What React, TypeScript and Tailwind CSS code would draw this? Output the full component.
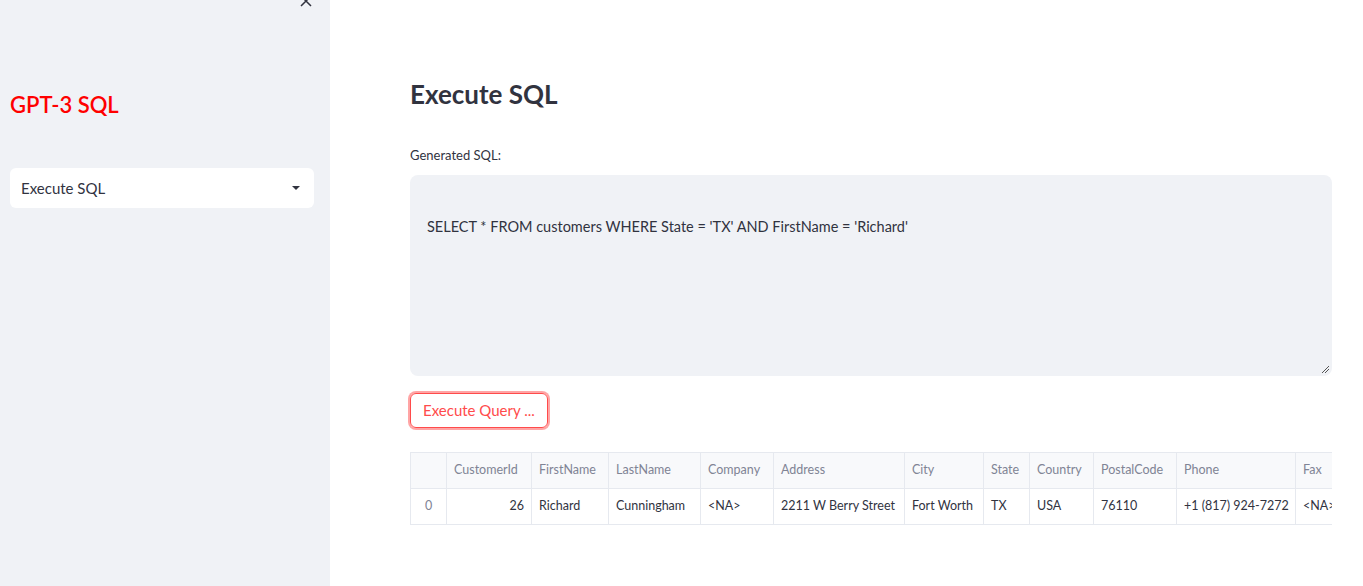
const COLS = [
  { name: "", w: 36, val: "0", align: "text-center", idx: true },
  { name: "CustomerId", w: 85, val: "26", align: "text-right" },
  { name: "FirstName", w: 77, val: "Richard" },
  { name: "LastName", w: 92, val: "Cunningham" },
  { name: "Company", w: 73, val: "<NA>" },
  { name: "Address", w: 131, val: "2211 W Berry Street" },
  { name: "City", w: 79, val: "Fort Worth" },
  { name: "State", w: 46, val: "TX" },
  { name: "Country", w: 64, val: "USA" },
  { name: "PostalCode", w: 83, val: "76110" },
  { name: "Phone", w: 119, val: "+1 (817) 924-7272" },
  { name: "Fax", w: 80, val: "<NA>" },
];

const font = { fontFamily: '"Source Sans Pro", Lato, "Noto Sans", sans-serif' };

export default function App() {
  return (
    <div className="flex h-[586px] w-[1363px] overflow-hidden bg-white text-[#31333f]" style={font}>
      {/* Sidebar */}
      <aside className="relative w-[330px] shrink-0 bg-[#f0f2f6] pl-[10px] pr-[16px]">
        <svg className="absolute left-[299px] top-[-6px]" width="14" height="14" viewBox="0 0 14 14" fill="none" stroke="#31333f" strokeWidth="1.5">
          <path d="M2 2l10 10M12 2L2 12" />
        </svg>
        <h2 className="mt-[90px] text-[22px] font-semibold leading-[30px] text-[#ff0000]">GPT-3 SQL</h2>
        <div className="mt-[48px] flex h-[40px] items-center justify-between rounded-[6px] bg-white pl-[11px] pr-[13px] text-[15px]">
          <span>Execute SQL</span>
          <svg width="10" height="6" viewBox="0 0 10 6"><path d="M1 1h8L5 5z" fill="#31333f" /></svg>
        </div>
      </aside>

      {/* Main */}
      <main className="min-w-0 flex-1 pl-[80px]">
        <div className="w-[922px]">
          <h1 className="mt-[77px] text-[26px] font-bold leading-[34px]">Execute SQL</h1>
          <div className="mt-[36px] text-[13px] leading-[16px]">Generated SQL:</div>
          <div className="relative mt-[12px] h-[201px] rounded-[8px] bg-[#f0f2f6] px-[17px] pt-[41px] text-[14.5px]">
            SELECT * FROM customers WHERE State = 'TX' AND FirstName = 'Richard'
            <svg className="absolute bottom-[2px] right-[2px]" width="9" height="9" viewBox="0 0 9 9" stroke="#555" strokeWidth="1">
              <path d="M8 1L1 8M8 4L4 8" />
            </svg>
          </div>
          <button className="mt-[17px] h-[35px] rounded-[6px] border border-[#ff4b4b] px-[12px] text-[15px] text-[#ff4b4b] shadow-[0_0_0_2px_rgba(255,75,75,0.5)]">
            Execute Query ...
          </button>
          <div className="mt-[24px] overflow-hidden">
            <table className="border-collapse text-[12.5px]" style={{ tableLayout: "fixed" }}>
              <thead>
                <tr className="h-[36px] bg-[#f8f9fb]">
                  {COLS.map((c, i) => (
                    <th key={i} style={{ width: c.w, minWidth: c.w, maxWidth: c.w }} className="overflow-hidden whitespace-nowrap border border-[#e6e9ef] px-[7px] text-left font-normal text-[#808495]">
                      {c.name}
                    </th>
                  ))}
                </tr>
              </thead>
              <tbody>
                <tr className="h-[36px]">
                  {COLS.map((c, i) => (
                    <td key={i} style={{ width: c.w, minWidth: c.w, maxWidth: c.w }} className={`overflow-hidden whitespace-nowrap border border-[#e6e9ef] px-[7px] ${c.align ?? "text-left"} ${c.idx ? "text-[#808495]" : ""}`}>
                      {c.val}
                    </td>
                  ))}
                </tr>
              </tbody>
            </table>
          </div>
        </div>
      </main>
    </div>
  );
}
